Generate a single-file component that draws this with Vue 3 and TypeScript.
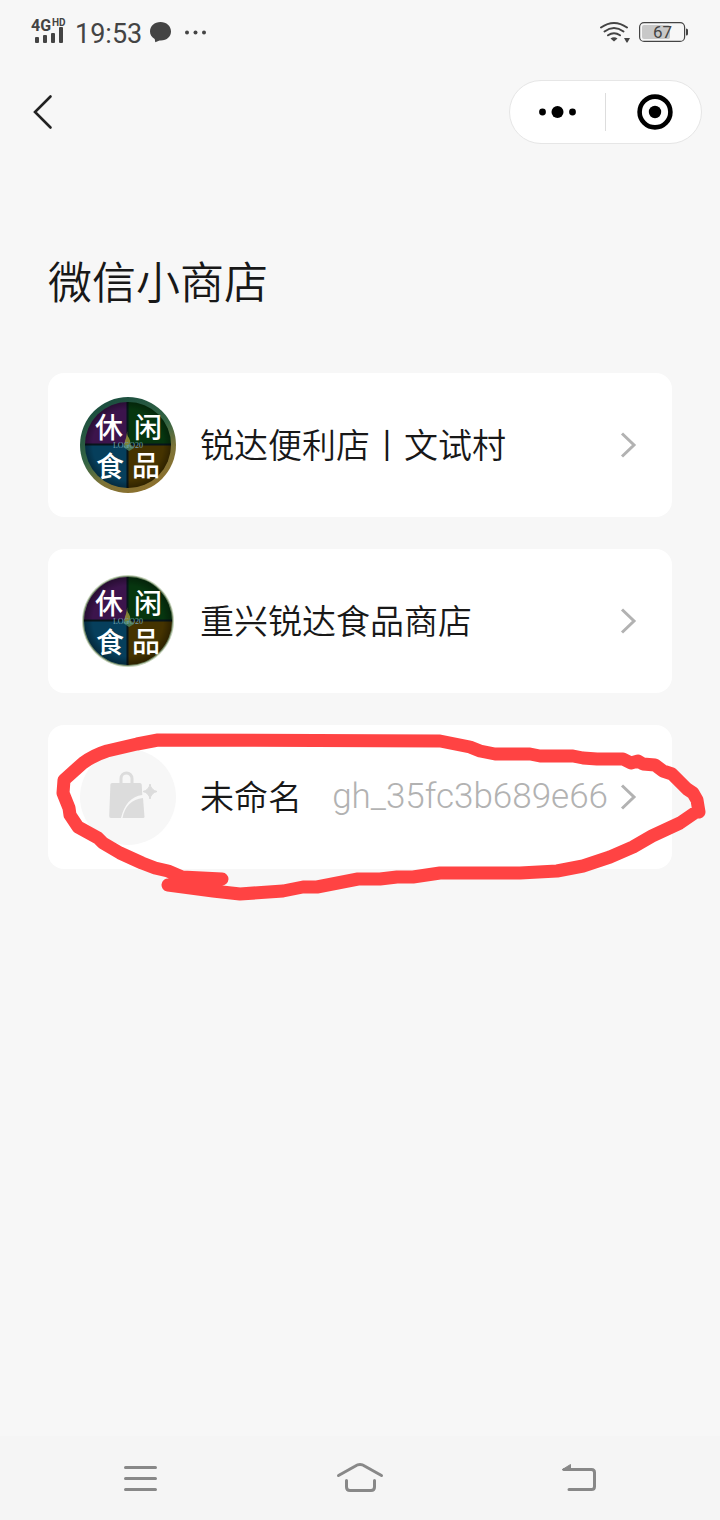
<script setup lang="ts">
interface Shop {
  name: string
  id?: string
  avatar: 'ring' | 'soft' | 'empty'
  marked?: boolean
}

const shops: Shop[] = [
  { name: '锐达便利店丨文试村', avatar: 'ring' },
  { name: '重兴锐达食品商店', avatar: 'soft' },
  { name: '未命名', id: 'gh_35fc3b689e66', avatar: 'empty', marked: true },
]
</script>

<template>
  <div class="page">
    <div class="status">
      <div class="status-side">
        <svg class="signal" width="36" height="32" viewBox="31 16 36 32" role="img" aria-label="4G HD">
          <text class="net" x="31" y="31">4G</text>
          <text class="hd" x="52" y="26">HD</text>
          <rect x="35" y="37" width="4" height="6" rx="1" />
          <rect x="43" y="35" width="4" height="8" rx="1" />
          <rect x="51" y="33" width="4" height="10" rx="1" />
          <rect x="59" y="27" width="4" height="16" rx="1" />
        </svg>
        <span class="time">19:53</span>
        <svg class="bubble" width="22" height="24" viewBox="150 20 22 24" aria-hidden="true">
          <path d="M160.500 22C154.500 22 150 26 150 31.500C150 34.800 151.700 37.300 154.700 39L155.300 42.300L159.500 40.400C166.500 41 171 36.800 171 31.500C171 26 166.500 22 160.500 22Z" />
        </svg>
        <svg class="more" width="24" height="6" viewBox="0 0 24 6" aria-hidden="true">
          <circle cx="3" cy="3.500" r="2" /><circle cx="11.500" cy="3.500" r="2" /><circle cx="20" cy="3.500" r="2" />
        </svg>
      </div>
      <div class="status-side">
        <svg width="31" height="22" viewBox="600 21 31 22" aria-hidden="true">
          <g class="wifi-arcs">
            <path d="M601 27.500Q614 18.500 627 27.500" />
            <path d="M604.500 31.500Q614 24.500 623.500 31.500" />
            <path d="M608 35.300Q614 31 620 35.300" />
          </g>
          <path d="M610.500 38.500Q614 36 617.500 38.500L614 41.500Z" />
          <path d="M624 38H630L627.500 42.500H626.500Z" />
        </svg>
        <svg class="battery" width="50" height="22" viewBox="639 21 50 22" role="img" aria-label="67">
          <rect class="battery-case" x="639.600" y="22.600" width="45" height="18.800" rx="4.500" />
          <rect class="battery-level" x="642" y="25" width="28" height="14" rx="2" />
          <path d="M686 28.500Q688 28.500 688 30V34Q688 35.500 686 35.500Z" />
          <text class="battery-text" x="662.500" y="38" text-anchor="middle">67</text>
        </svg>
      </div>
    </div>

    <header class="header">
      <button class="back" type="button" aria-label="返回">
        <svg width="24" height="36" viewBox="0 0 24 36"><path d="M18.500 2.500L3 18L18.500 33.500" /></svg>
      </button>
      <div class="capsule">
        <button class="capsule-btn" type="button" aria-label="更多">
          <svg width="40" height="14" viewBox="0 0 40 14">
            <circle cx="4.500" cy="7" r="3.400" /><circle cx="19.500" cy="7" r="6" /><circle cx="34.500" cy="7" r="3.400" />
          </svg>
        </button>
        <span class="capsule-line"></span>
        <button class="capsule-btn" type="button" aria-label="关闭">
          <svg width="38" height="36" viewBox="0 0 38 36">
            <circle class="target-ring" cx="20" cy="18" r="15.400" /><circle cx="20" cy="18" r="6.200" />
          </svg>
        </button>
      </div>
    </header>

    <main class="content">
      <h1 class="title">微信小商店</h1>
      <ul class="list">
        <li v-for="(shop, i) in shops" :key="shop.name" class="item">
          <button class="card" type="button">
            <svg v-if="shop.avatar !== 'empty'" class="avatar" viewBox="0 0 96 96" aria-hidden="true">
              <defs>
                <linearGradient :id="`rim${i}`" x1="0.200" y1="0" x2="0.700" y2="1">
                  <stop offset="0" stop-color="#174a3e" />
                  <stop offset="0.500" stop-color="#356544" />
                  <stop offset="0.720" stop-color="#7c7338" />
                  <stop offset="1" stop-color="#8e702c" />
                </linearGradient>
                <radialGradient :id="`shade${i}`">
                  <stop offset="0.800" stop-color="#000" stop-opacity="0" />
                  <stop offset="1" stop-color="#000" stop-opacity="0.350" />
                </radialGradient>
                <clipPath :id="`disc${i}`"><circle cx="48" cy="48" :r="shop.avatar === 'ring' ? 43 : 44" /></clipPath>
              </defs>
              <circle v-if="shop.avatar === 'ring'" cx="48" cy="48" r="48" :fill="`url(#rim${i})`" />
              <template v-else>
                <circle cx="48" cy="48" r="46" fill="#c5d2ba" />
                <circle cx="48" cy="48" r="45" fill="#6b8061" />
              </template>
              <g :clip-path="`url(#disc${i})`">
                <rect width="48" height="48" fill="#3c144c" />
                <rect x="48" width="48" height="48" fill="#06360f" />
                <rect y="48" width="48" height="48" fill="#063f5c" />
                <rect x="48" y="48" width="48" height="48" fill="#453300" />
                <path d="M47.500 0V96M0 47.500H96" stroke="#06151b" stroke-width="2" />
                <circle cx="48" cy="48" r="44" :fill="`url(#shade${i})`" />
              </g>
              <path d="M48 30Q46 38 49 41Q52 46 47 51Q43 47 46 41Z" fill="#a9a43d" opacity="0.750" />
              <path d="M43 50Q49 44 54 51L49 54Z" fill="#519674" opacity="0.700" />
              <text class="watermark" x="48" y="51" text-anchor="middle">LOGO20</text>
              <g class="seal">
                <text x="15" y="41">休</text>
                <text x="54" y="41">闲</text>
                <text x="16" y="80">食</text>
                <text x="52" y="79">品</text>
              </g>
            </svg>
            <svg v-else class="avatar" viewBox="0 0 96 96" aria-hidden="true">
              <circle cx="48" cy="48" r="48" fill="#f7f7f7" />
              <path d="M41 34V29.500A5.500 5.500 0 0 1 52 29.500V34" fill="none" stroke="#dcdcdc" stroke-width="3" />
              <path d="M32 34H60Q61.500 34 61.700 35.500L62.300 46Q46 48 41 69H31Q29 69 29.200 67L30.400 35.500Q30.500 34 32 34Z" fill="#dcdcdc" />
              <path d="M63 49L64.500 68Q64.500 69 63 69H42.500Q46 51 63 49Z" fill="#dcdcdc" />
              <path d="M70 35Q71 41 77 42.500Q71 44 70 50Q69 44 63 42.500Q69 41 70 35Z" fill="#dcdcdc" stroke="#dcdcdc" />
            </svg>
            <span class="name">{{ shop.name }}</span>
            <span v-if="shop.id" class="shop-id">{{ shop.id }}</span>
            <svg class="chevron" width="24" height="32" viewBox="0 0 24 32" aria-hidden="true"><path d="M6 4.500L18 16L6 27.500" /></svg>
          </button>
          <svg v-if="shop.marked" class="marker" viewBox="48 725 672 180" preserveAspectRatio="none" aria-hidden="true">
            <path d="M222 879L182 877L168 871L155 868L142 863L120 853L103 843L98 838L78 827L70 815L69 808L63 793L64 780L83 763Q94 755 107 751L137 744L158 740L440 741L470 747L480 751L495 754L530 754L540 756L573 756L583 758L597 759L623 759L631 763L638 761L643 764L655 765L663 771L672 774L687 789L693 793L697 800L699 812L696 812L680 823L652 836L633 847L610 857L583 866L557 871L520 873L440 873L413 877H397L380 879H358L317 887L303 887L283 891L240 894L213 891L168 885" />
          </svg>
        </li>
      </ul>
    </main>

    <nav class="nav">
      <button class="nav-btn" type="button" aria-label="最近任务">
        <svg width="48" height="36" viewBox="0 0 48 36"><path d="M9.500 7.500H39.500M9.500 18.500H39.500M9.500 29.500H39.500" /></svg>
      </button>
      <button class="nav-btn" type="button" aria-label="主屏幕">
        <svg width="48" height="36" viewBox="0 0 48 36"><path d="M2.500 15.500L19 6.200Q24 3 29 6.200L45.500 15.500M10.500 20.500V27Q10.500 30.500 14 30.500H35Q38.500 30.500 38.500 27V20.500" /></svg>
      </button>
      <button class="nav-btn" type="button" aria-label="返回上一级">
        <svg width="48" height="36" viewBox="0 0 48 36"><path d="M8 9.500H35.500Q38.500 9.500 38.500 12.500V26.500Q38.500 29.500 35.500 29.500H13" /><path class="nav-tip" d="M6.500 9.500L14.500 4.500V9.500Z" /></svg>
      </button>
    </nav>
  </div>
</template>

<style>
body {
  background: #f7f7f7;
}
</style>

<style scoped>
.page {
  display: flex;
  flex-direction: column;
  min-height: 100vh;
  background: #f7f7f7;
  color: #181818;
  font-family: "Noto Sans CJK SC", sans-serif;
}
button {
  margin: 0;
  padding: 0;
  border: 0;
  background: none;
  color: inherit;
  font: inherit;
  cursor: pointer;
}
svg {
  display: block;
  flex: none;
}
.status {
  display: flex;
  justify-content: space-between;
  align-items: center;
  height: 64px;
  padding: 0 31px;
  color: #444;
  fill: #444;
  font-family: Roboto, sans-serif;
}
.status-side {
  display: flex;
  align-items: center;
  gap: 8px;
}
.signal {
  overflow: visible;
}
.net {
  font-size: 16px;
  font-weight: 700;
}
.hd {
  font-size: 10px;
  font-weight: 700;
}
.time {
  font-size: 27px;
  line-height: 32px;
  padding-top: 3px;
}
.more {
  margin-left: 4px;
}
.wifi-arcs {
  fill: none;
  stroke: #444;
  stroke-width: 2;
  stroke-linecap: round;
}
.battery-case {
  fill: none;
  stroke: #444;
  stroke-width: 1.200;
}
.battery-level {
  fill: #c8c8c8;
}
.battery-text {
  font-size: 17px;
}
.header {
  display: flex;
  justify-content: space-between;
  align-items: center;
  height: 96px;
  padding: 0 18px 0 32px;
}
.back path {
  fill: none;
  stroke: #222;
  stroke-width: 2.600;
  stroke-linecap: round;
}
.capsule {
  display: flex;
  align-items: center;
  box-sizing: border-box;
  width: 193px;
  height: 64px;
  border: 1px solid #e6e6e6;
  border-radius: 32px;
  background: #fff;
}
.capsule-btn {
  display: flex;
  flex: 1;
  justify-content: center;
  align-items: center;
  height: 100%;
}
.capsule-line {
  width: 1px;
  height: 38px;
  background: #ddd;
}
.target-ring {
  fill: none;
  stroke: #000;
  stroke-width: 4.600;
}
.content {
  flex: 1;
  padding: 90px 48px 32px;
}
.title {
  margin: 0 0 63px;
  font-size: 44px;
  font-weight: 350;
  line-height: 60px;
}
.list {
  display: flex;
  flex-direction: column;
  gap: 32px;
  margin: 0;
  padding: 0;
  list-style: none;
}
.item {
  position: relative;
}
.card {
  display: flex;
  align-items: center;
  width: 100%;
  padding: 24px 32px;
  border-radius: 16px;
  background: #fff;
  text-align: left;
}
.avatar {
  width: 96px;
  height: 96px;
  margin-right: 24px;
}
.seal {
  fill: #fff;
  font-family: "Noto Sans CJK SC", sans-serif;
  font-size: 28px;
  font-weight: 500;
}
.watermark {
  fill: #6fa0ae;
  font-family: "Liberation Serif", serif;
  font-size: 8px;
}
.name {
  flex: 1;
  padding-bottom: 2px;
  font-size: 34px;
  font-weight: 350;
  line-height: 48px;
  white-space: nowrap;
}
.shop-id {
  margin-right: 8px;
  color: #b2b2b2;
  font-family: Roboto, sans-serif;
  font-size: 35px;
  font-weight: 300;
  line-height: 48px;
}
.chevron path {
  fill: none;
  stroke: #b2b2b2;
  stroke-width: 3;
}
.marker {
  position: absolute;
  top: 0;
  left: 0;
  width: calc(100% + 48px);
  height: 180px;
  pointer-events: none;
}
.marker path {
  fill: none;
  stroke: #ff4343;
  stroke-width: 13;
  stroke-linecap: round;
  stroke-linejoin: round;
}
.nav {
  display: flex;
  justify-content: space-around;
  align-items: center;
  height: 84px;
  padding: 0 30px;
  background: #f5f5f5;
}
.nav-btn path {
  fill: none;
  stroke: #888;
  stroke-width: 3;
  stroke-linecap: round;
}
.nav-btn .nav-tip {
  fill: #888;
  stroke-width: 1;
}
</style>
